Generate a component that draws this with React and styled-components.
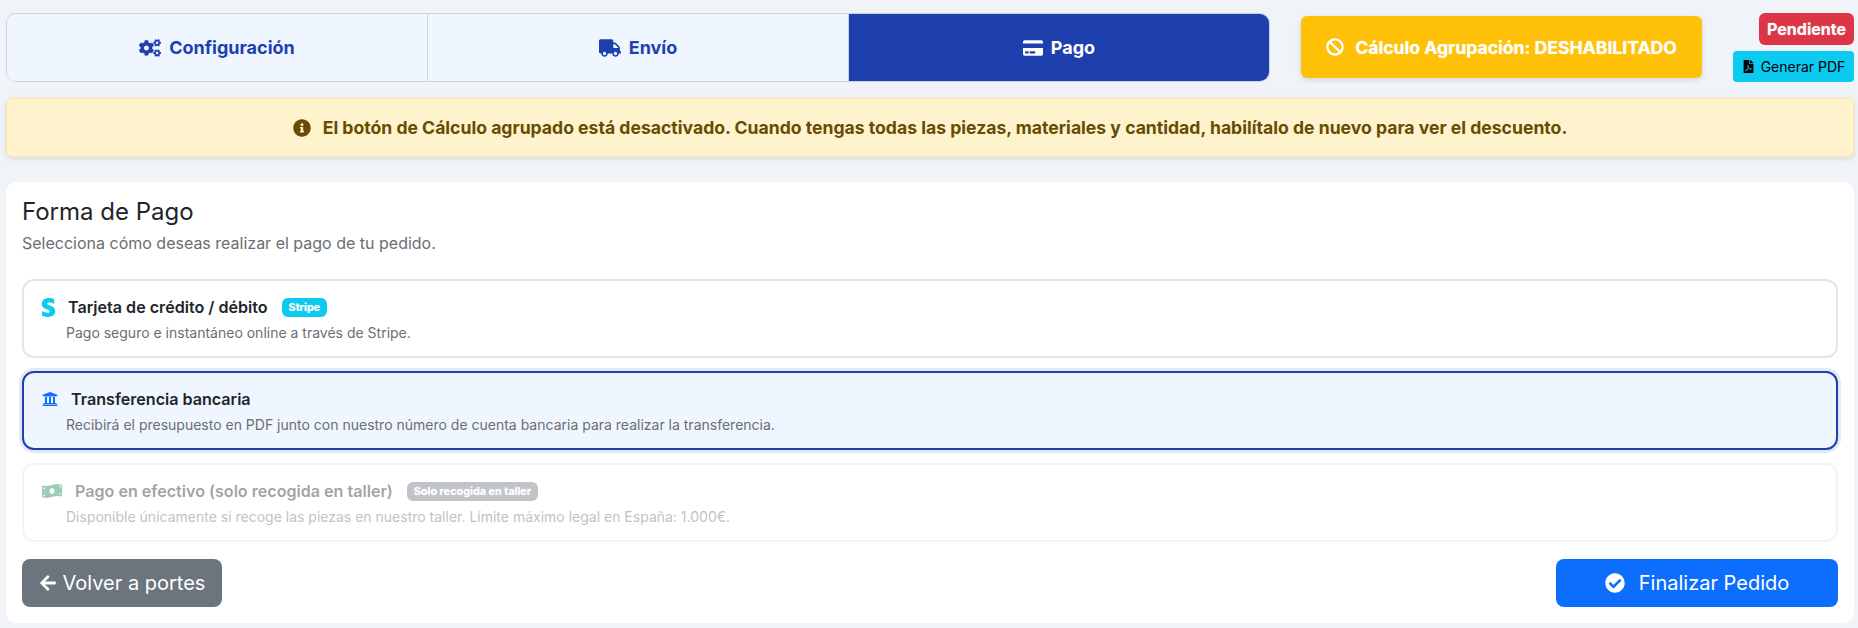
import React from 'react';
import styled, { createGlobalStyle } from 'styled-components';
import { FaCogs, FaTruck, FaCreditCard, FaBan, FaFilePdf, FaInfoCircle, FaStripeS, FaUniversity, FaMoneyBillWave, FaArrowLeft, FaCheckCircle } from 'react-icons/fa';

const Global = createGlobalStyle`
  html, body { margin: 0; padding: 0; background: #f0f4f8; }
  * { box-sizing: border-box; }
  body { font-family: Inter, "Liberation Sans", sans-serif; color: #212529; }
`;
const Page = styled.div`
  padding: 13px 4px 5px 6px;
  display: flex;
  flex-direction: column;
  width: 1858px;
  height: 628px;
`;
const Header = styled.div`
  display: flex;
  align-items: flex-start;
  height: 69px;
`;
const Tabs = styled.div`
  display: flex;
  width: 1264px;
  height: 69px;
  border: 1px solid #ccd3e0;
  border-radius: 10px;
  overflow: hidden;
`;
const Tab = styled.div`
  flex: 1;
  display: flex;
  align-items: center;
  justify-content: center;
  gap: 8px;
  font-size: 18px;
  font-weight: 700;
  color: ${p => (p.$active ? '#fff' : '#1e40af')};
  background: ${p => (p.$active ? '#1e40af' : '#eff6ff')};
  border-right: ${p => (p.$last ? 'none' : '1px solid #ccd3e0')};
`;
const GroupButton = styled.div`
  width: 401px;
  height: 62px;
  margin: 3px 0 0 31px;
  display: flex;
  align-items: center;
  justify-content: center;
  gap: 11px;
  background: #ffc107;
  color: #fff;
  font-size: 17.6px;
  font-weight: 700;
  text-shadow: 0 0 1px rgba(255, 255, 255, 0.7);
  border-radius: 6px;
  box-shadow: 0 2px 6px rgba(0, 0, 0, 0.12);
`;
const Side = styled.div`
  margin-left: auto;
  display: flex;
  flex-direction: column;
  align-items: flex-end;
  gap: 6px;
`;
const StatusBadge = styled.div`
  width: 95px;
  height: 32px;
  display: flex;
  align-items: center;
  justify-content: center;
  background: #dc3545;
  color: #fff;
  font-size: 16px;
  font-weight: 700;
  text-shadow: 0 0 1px rgba(255, 255, 255, 0.6);
  border-radius: 6px;
`;
const PdfButton = styled.div`
  width: 121px;
  height: 31px;
  display: flex;
  align-items: center;
  justify-content: center;
  gap: 6px;
  background: #0dcaf0;
  color: #000;
  font-size: 14px;
  border-radius: 4px;
`;
const Alert = styled.div`
  margin-top: 16px;
  height: 59px;
  display: flex;
  align-items: center;
  justify-content: center;
  gap: 12px;
  background: #fff3cd;
  border: 1px solid #ffe69c;
  border-radius: 6px;
  color: #664d03;
  font-size: 17.6px;
  font-weight: 700;
  box-shadow: 0 2px 6px rgba(0, 0, 0, 0.1);
`;
const Card = styled.div`
  margin-top: 25px;
  height: 441px;
  background: #fff;
  border-radius: 10px;
  padding: 15px 16px 16px 16px;
  display: flex;
  flex-direction: column;
`;
const Title = styled.div`
  font-size: 24px;
  font-weight: 400;
  line-height: 29px;
  color: #212529;
`;
const Subtitle = styled.div`
  margin-top: 5px;
  font-size: 16px;
  line-height: 24px;
  color: #6b6e72;
`;
const Options = styled.div`
  margin-top: 24px;
  display: flex;
  flex-direction: column;
  gap: 13px;
`;
const Option = styled.div`
  height: 79px;
  padding: 14px 18px;
  border: 2px solid ${p => (p.$selected ? '#1e40af' : '#dfe5f1')};
  border-radius: 12px;
  background: ${p => (p.$selected ? '#eff6ff' : '#fff')};
  box-shadow: ${p => (p.$selected ? '0 0 0 3px #e4e9f4' : 'none')};
  opacity: ${p => (p.$disabled ? 0.42 : 1)};
`;
const OptionHead = styled.div`
  display: flex;
  align-items: center;
  height: 24px;
`;
const OptionIcon = styled.span`
  display: inline-flex;
  color: ${p => p.$color};
  font-size: ${p => p.$size}px;
  margin-left: ${p => p.$shift || 0}px;
  margin-right: ${p => p.$gap || 13}px;
`;
const OptionTitle = styled.span`
  font-size: 16.1px;
  font-weight: 600;
  color: #212529;
`;
const Tag = styled.span`
  margin-left: 14px;
  height: 19px;
  padding: 0 7px;
  display: inline-flex;
  align-items: center;
  border-radius: 6px;
  background: ${p => p.$bg};
  color: #fff;
  font-size: 10.8px;
  font-weight: 700;
  text-shadow: 0 0 1px rgba(255, 255, 255, 0.6);
`;
const OptionDesc = styled.div`
  margin: 2.5px 0 0 24px;
  font-size: 14px;
  line-height: 21px;
  color: #6b6e72;
`;
const Actions = styled.div`
  margin-top: 17px;
  display: flex;
  justify-content: space-between;
`;
const BackButton = styled.div`
  width: 200px;
  height: 48px;
  display: flex;
  align-items: center;
  justify-content: center;
  gap: 6px;
  background: #6c757d;
  color: #fff;
  font-size: 20px;
  border-radius: 8px;
`;
const FinishButton = styled.div`
  width: 282px;
  height: 48px;
  display: flex;
  align-items: center;
  justify-content: center;
  gap: 14px;
  background: #0d6efd;
  color: #fff;
  font-size: 20px;
  border-radius: 8px;
`;

export default function App() {
  return (
    <>
      <Global />
      <Page>
        <Header>
          <Tabs>
            <Tab><FaCogs size={22} />Configuración</Tab>
            <Tab><FaTruck size={22} />Envío</Tab>
            <Tab $active $last><FaCreditCard size={20} />Pago</Tab>
          </Tabs>
          <GroupButton><FaBan size={18} />Cálculo Agrupación: DESHABILITADO</GroupButton>
          <Side>
            <StatusBadge>Pendiente</StatusBadge>
            <PdfButton><FaFilePdf size={13} />Generar PDF</PdfButton>
          </Side>
        </Header>
        <Alert><FaInfoCircle size={18} />El botón de Cálculo agrupado está desactivado. Cuando tengas todas las piezas, materiales y cantidad, habilítalo de nuevo para ver el descuento.</Alert>
        <Card>
          <Title>Forma de Pago</Title>
          <Subtitle>Selecciona cómo deseas realizar el pago de tu pedido.</Subtitle>
          <Options>
            <Option>
              <OptionHead>
                <OptionIcon $color="#0dcaf0" $size={19} $shift={-3} $gap={10}><FaStripeS /></OptionIcon>
                <OptionTitle>Tarjeta de crédito / débito</OptionTitle>
                <Tag $bg="#0dcaf0">Stripe</Tag>
              </OptionHead>
              <OptionDesc>Pago seguro e instantáneo online a través de Stripe.</OptionDesc>
            </Option>
            <Option $selected>
              <OptionHead>
                <OptionIcon $color="#0d6efd" $size={16}><FaUniversity /></OptionIcon>
                <OptionTitle>Transferencia bancaria</OptionTitle>
              </OptionHead>
              <OptionDesc>Recibirá el presupuesto en PDF junto con nuestro número de cuenta bancaria para realizar la transferencia.</OptionDesc>
            </Option>
            <Option $disabled>
              <OptionHead>
                <OptionIcon $color="#198754" $size={20}><FaMoneyBillWave /></OptionIcon>
                <OptionTitle>Pago en efectivo (solo recogida en taller)</OptionTitle>
                <Tag $bg="#6c757d">Solo recogida en taller</Tag>
              </OptionHead>
              <OptionDesc>Disponible únicamente si recoge las piezas en nuestro taller. Límite máximo legal en España: 1.000€.</OptionDesc>
            </Option>
          </Options>
          <Actions>
            <BackButton><FaArrowLeft size={18} />Volver a portes</BackButton>
            <FinishButton><FaCheckCircle size={20} />Finalizar Pedido</FinishButton>
          </Actions>
        </Card>
      </Page>
    </>
  );
}
